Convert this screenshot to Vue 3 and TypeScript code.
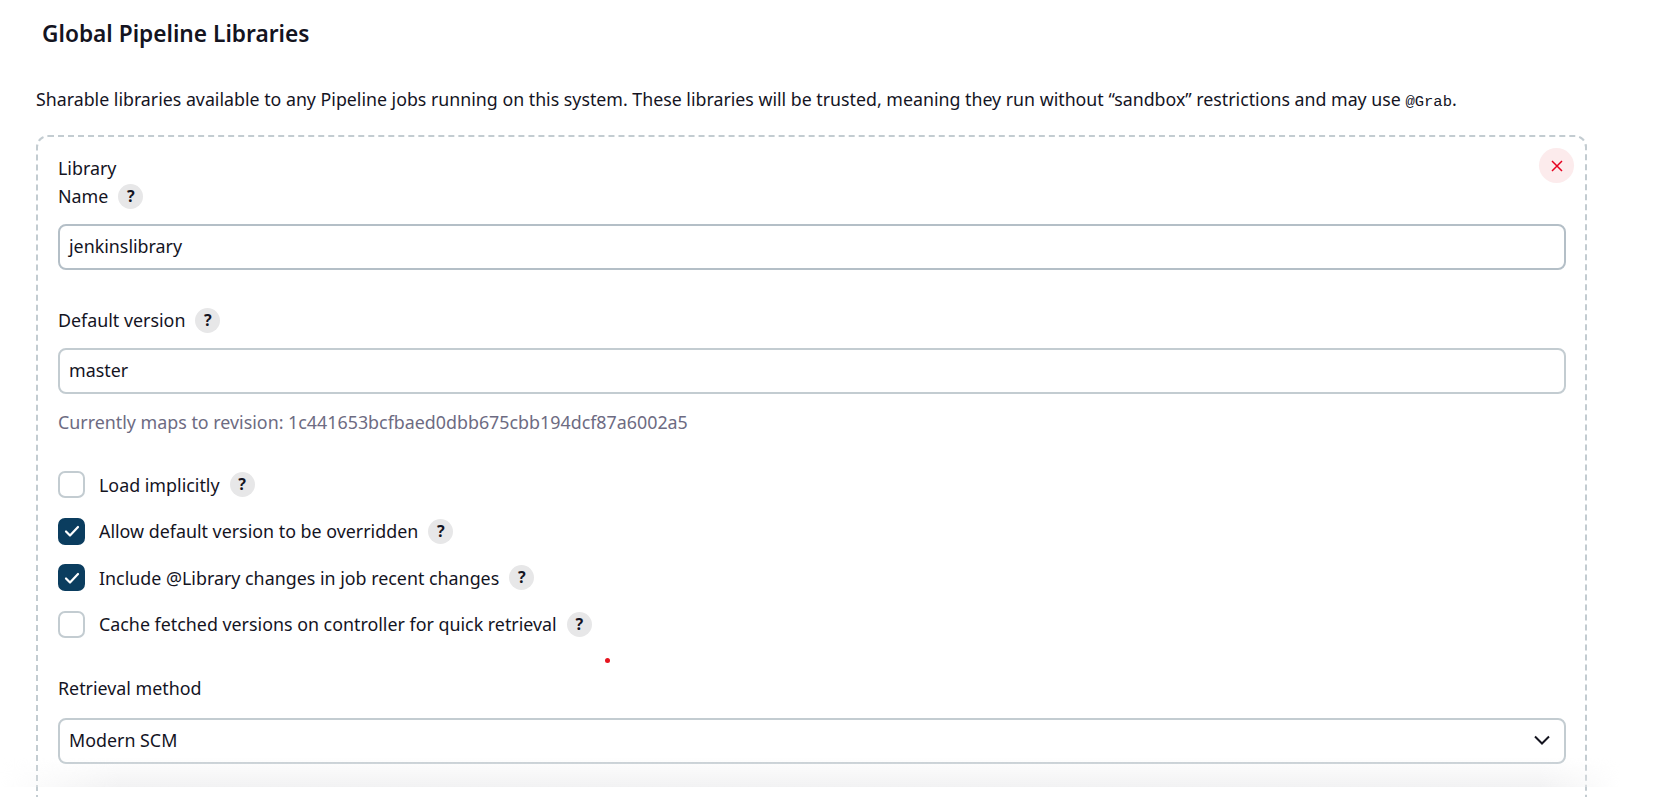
<script setup lang="ts">
const options = [
  { label: "Load implicitly", checked: false },
  { label: "Allow default version to be overridden", checked: true },
  { label: "Include @Library changes in job recent changes", checked: true },
  { label: "Cache fetched versions on controller for quick retrieval", checked: false },
];
</script>

<template>
  <div class="page">
    <h2 class="title">Global Pipeline Libraries</h2>
    <p class="desc">
      Sharable libraries available to any Pipeline jobs running on this system. These libraries will be trusted, meaning they run without “sandbox” restrictions and may use <code>@Grab</code>.
    </p>

    <div class="card">
      <button class="close" type="button">
        <svg width="14" height="14" viewBox="0 0 14 14">
          <path d="M2 2l10 10M12 2L2 12" stroke="#e6001f" stroke-width="1.5" fill="none" />
        </svg>
      </button>

      <div class="label-top">Library</div>
      <div class="label">Name <span class="help">?</span></div>
      <div class="input">jenkinslibrary</div>

      <div class="label version-label">Default version <span class="help">?</span></div>
      <div class="input light">master</div>
      <div class="hint">Currently maps to revision: 1c441653bcfbaed0dbb675cbb194dcf87a6002a5</div>

      <div class="checks">
        <div v-for="opt in options" :key="opt.label" class="check-row">
          <span class="box" :class="{ checked: opt.checked }">
            <svg v-if="opt.checked" width="16" height="16" viewBox="0 0 16 16">
              <path d="M2 8.5l4 4 8-8.5" stroke="#fff" stroke-width="2.2" fill="none" stroke-linecap="round" stroke-linejoin="round" />
            </svg>
          </span>
          <span class="check-label">{{ opt.label }}</span>
          <span class="help">?</span>
        </div>
      </div>

      <div class="label method-label">Retrieval method</div>
      <div class="input light select">
        Modern SCM
        <svg width="18" height="12" viewBox="0 0 18 12">
          <path d="M2 2.5l7 7 7-7" stroke="#14141f" stroke-width="2" fill="none" />
        </svg>
      </div>
    </div>

    <span class="dot"></span>
    <div class="fade"></div>
  </div>
</template>

<style>
html, body {
  margin: 0;
  background: #fff;
  overflow: hidden;
}
</style>

<style scoped>
.page {
  position: relative;
  height: 797px;
  overflow: hidden;
  padding: 0 0 0 36px;
  box-sizing: border-box;
  font-family: "Noto Sans", sans-serif;
  font-size: 17.85px;
  color: #14141f;
}
.title {
  margin: 0 0 0 6px;
  padding-top: 19px;
  font-size: 22.7px;
  line-height: 30px;
  font-weight: 600;
}
.desc {
  margin: 34px 0 0;
  font-size: 17.78px;
  line-height: 32px;
  white-space: nowrap;
}
.desc code {
  font-family: "Liberation Mono", monospace;
  font-size: 15.5px;
}
.card {
  position: relative;
  width: 1551px;
  height: 800px;
  margin-top: 17px;
  padding: 17px 19px 0 20px;
  box-sizing: border-box;
  border: 2px dashed #c3ccd1;
  border-radius: 12px;
}
.close {
  position: absolute;
  top: 11px;
  right: 11px;
  width: 35px;
  height: 35px;
  padding: 0;
  border: 0;
  border-radius: 50%;
  background: #fcebec;
  display: flex;
  align-items: center;
  justify-content: center;
}
.label-top,
.label {
  line-height: 28px;
  display: flex;
  align-items: center;
  gap: 10px;
}
.help {
  flex: none;
  width: 25px;
  height: 25px;
  border-radius: 50%;
  background: #e7e7e8;
  font-size: 16px;
  font-weight: 700;
  line-height: 25px;
  text-align: center;
}
.input {
  height: 46px;
  margin-top: 14px;
  padding: 0 10px 2px 9px;
  box-sizing: border-box;
  border: 2px solid #b4bfc7;
  border-radius: 8px;
  display: flex;
  align-items: center;
}
.input.light {
  border-color: #c3ccd1;
}
.version-label {
  margin-top: 36px;
}
.hint {
  margin-top: 13px;
  line-height: 30px;
  color: #6d6b82;
}
.checks {
  margin-top: 34.5px;
  display: flex;
  flex-direction: column;
  gap: 20.5px;
}
.check-row {
  height: 26px;
  display: flex;
  align-items: center;
}
.box {
  flex: none;
  width: 27px;
  height: 27px;
  margin-right: 14px;
  box-sizing: border-box;
  border: 2px solid #c3ccd1;
  border-radius: 7px;
  display: flex;
  align-items: center;
  justify-content: center;
}
.box.checked {
  background: #0b3d5f;
  border-color: #0b3d5f;
}
.check-label {
  margin-right: 10px;
}
.method-label {
  margin-top: 37px;
}
.select {
  justify-content: space-between;
  margin-top: 15.5px;
  padding-right: 13px;
}
.dot {
  position: absolute;
  left: 605px;
  top: 658px;
  width: 5px;
  height: 5px;
  border-radius: 50%;
  background: #e6141e;
}
.fade {
  position: absolute;
  left: 0;
  right: 0;
  top: 757px;
  height: 30px;
  background: linear-gradient(#fff0, #f2f2f3);
  -webkit-mask-image: linear-gradient(90deg, transparent, #000 120px, #000 1540px, transparent 1620px);
  mask-image: linear-gradient(90deg, transparent, #000 120px, #000 1540px, transparent 1620px);
}
.fade::after {
  content: "";
  position: absolute;
  left: 0;
  right: 0;
  top: 30px;
  height: 10px;
  background: #fdfdfd;
}
</style>
